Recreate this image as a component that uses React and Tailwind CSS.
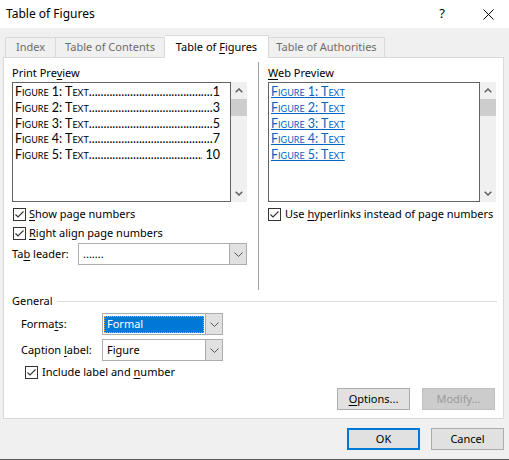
import React from "react";

const ui = { fontFamily: '"Noto Sans", "Open Sans", sans-serif' };
const cal = { fontFamily: 'Lato, "Noto Sans", sans-serif', fontVariant: "small-caps" };

function U({ children }) {
  return <span className="underline underline-offset-2">{children}</span>;
}

function Check() {
  return (
    <span className="flex h-[13px] w-[13px] shrink-0 items-center justify-center border border-[#333333] bg-white">
      <svg width="11" height="11" viewBox="0 0 11 11">
        <path d="M1.5 5.5 L4 8 L9.5 2.5" fill="none" stroke="#333333" strokeWidth="1.1" />
      </svg>
    </span>
  );
}

function Chevron() {
  return (
    <svg width="9" height="5" viewBox="0 0 9 5">
      <path d="M0.5 0.5 L4.5 4.5 L8.5 0.5" fill="none" stroke="#555555" strokeWidth="1" />
    </svg>
  );
}

function Scrollbar() {
  return (
    <div className="flex w-[16px] shrink-0 flex-col items-center bg-[#f0f0f0]">
      <div className="flex h-[17px] w-full items-center justify-center">
        <svg width="8" height="5" viewBox="0 0 8 5">
          <path d="M0.7 4.3 L4 1 L7.3 4.3" fill="none" stroke="#606060" strokeWidth="1.5" />
        </svg>
      </div>
      <div className="h-[17px] w-full bg-[#cdcdcd]" />
      <div className="flex-1" />
      <div className="flex h-[17px] w-full items-center justify-center">
        <svg width="8" height="5" viewBox="0 0 8 5">
          <path d="M0.7 0.7 L4 4 L7.3 0.7" fill="none" stroke="#606060" strokeWidth="1.5" />
        </svg>
      </div>
    </div>
  );
}

const figures = [
  ["1", "1"],
  ["2", "3"],
  ["3", "5"],
  ["4", "7"],
  ["5", "10"],
];

const dots = ".".repeat(120);

function Select({ value, focused, w }) {
  return (
    <div className={`flex h-[22px] ${w} border border-[#adadad] bg-white`}>
      <div className="flex min-w-0 flex-1 items-center px-[1px]">
        {focused ? (
          <div className="flex h-[17px] w-full items-center border border-dotted border-[#f0a040] bg-[#0078d7] px-[2px] text-white">
            {value}
          </div>
        ) : (
          <span className="px-[3px]">{value}</span>
        )}
      </div>
      <div className="flex w-[17px] items-center justify-center border-l border-[#adadad] bg-[#e1e1e1]">
        <Chevron />
      </div>
    </div>
  );
}

function Button({ children, primary, disabled }) {
  return (
    <div
      className={`flex h-[22px] w-[73px] items-center justify-center ${
        primary
          ? "border-2 border-[#0078d7] bg-[#e1e1e1]"
          : disabled
          ? "border border-[#bfbfbf] bg-[#cccccc] text-[#9a9a9a]"
          : "border border-[#adadad] bg-[#e1e1e1]"
      }`}
    >
      <span>{children}</span>
    </div>
  );
}

export default function App() {
  return (
    <div
      className="flex h-[460px] w-[509px] flex-col overflow-hidden border-b border-[#5a5a5a] bg-[#f0f0f0] text-[11px] text-black"
      style={ui}
    >
      {/* title bar */}
      <div className="flex h-[28px] shrink-0 items-center bg-white pl-[6px]">
        <span className="text-[12px]">Table of Figures</span>
        <div className="flex-1" />
        <span className="mr-[38px] text-[13px]">?</span>
        <svg className="mr-[15px]" width="11" height="11" viewBox="0 0 11 11">
          <path d="M0.5 0.5 L10.5 10.5 M10.5 0.5 L0.5 10.5" stroke="#000" strokeWidth="1" />
        </svg>
      </div>

      {/* tabs */}
      <div className="flex h-[29px] shrink-0 items-end pl-[5px]">
        <div className="flex h-[20px] w-[51px] items-center justify-center border border-b-0 border-[#d9d9d9] text-[#6d6d6d]">
          <span>Index</span>
        </div>
        <div className="flex h-[20px] w-[109px] items-center justify-center border border-b-0 border-l-0 border-[#d9d9d9] text-[#6d6d6d]">
          <span>Table of Contents</span>
        </div>
        <div className="relative z-10 -mb-px flex h-[23px] w-[104px] items-center justify-center border border-b-0 border-l-0 border-[#d9d9d9] bg-white">
          <span>
            Table of <U>F</U>igures
          </span>
        </div>
        <div className="flex h-[20px] w-[116px] items-center justify-center border border-b-0 border-l-0 border-[#d9d9d9] text-[#6d6d6d]">
          <span>Table of Authorities</span>
        </div>
      </div>

      {/* panel */}
      <div className="ml-[3px] mr-[5px] flex h-[362px] shrink-0 flex-col border border-[#d9d9d9] bg-white">
        <div className="flex pt-[4px]">
          {/* left */}
          <div className="ml-[8px] flex w-[235px] shrink-0 flex-col pb-[25px]">
            <div className="mt-[3px] h-[16px] leading-[16px]">
              Print Pre<U>v</U>iew
            </div>
            <div className="mt-[1px] flex h-[120px]">
              <div className="min-w-0 flex-1 border border-[#646464] pl-[2px] pr-[10px] pt-[1px]" style={cal}>
                {figures.map(([n, p]) => (
                  <div key={n} className="flex h-[15.8px] items-center text-[12.5px] leading-[16px]">
                    <span className="shrink-0">Figure {n}: Text</span>
                    <span className="min-w-0 flex-1 overflow-hidden whitespace-nowrap">{dots}</span>
                    <span className="shrink-0">{n === "5" ? "\u00a0" + p : p}</span>
                  </div>
                ))}
              </div>
              <Scrollbar />
            </div>
            <div className="mt-[4px] flex h-[16px] items-center gap-[3px] pl-[1px]">
              <Check />
              <span>
                <U>S</U>how page numbers
              </span>
            </div>
            <div className="mt-[3px] flex h-[16px] items-center gap-[3px] pl-[1px]">
              <Check />
              <span>
                <U>R</U>ight align page numbers
              </span>
            </div>
            <div className="mt-[2px] flex items-center">
              <span className="w-[66px]">
                Ta<U>b</U> leader:
              </span>
              <Select value="......." w="w-[169px]" />
            </div>
          </div>

          {/* separator */}
          <div className="ml-[11px] w-px shrink-0 bg-[#a0a0a0]" />

          {/* right */}
          <div className="ml-[9px] flex w-[228px] shrink-0 flex-col">
            <div className="mt-[3px] h-[16px] leading-[16px]">
              <U>W</U>eb Preview
            </div>
            <div className="mt-[1px] flex h-[120px]">
              <div className="min-w-0 flex-1 border border-[#646464] pl-[2px] pt-[1px]" style={cal}>
                {figures.map(([n]) => (
                  <div key={n} className="h-[15.8px] text-[12.5px] leading-[16px] text-[#0563c1]">
                    <span className="underline underline-offset-1">Figure {n}: Text</span>
                  </div>
                ))}
              </div>
              <Scrollbar />
            </div>
            <div className="mt-[4px] flex h-[16px] items-center gap-[4px] whitespace-nowrap">
              <Check />
              <span>
                Use <U>h</U>yperlinks instead of page numbers
              </span>
            </div>
          </div>
        </div>

        {/* general */}
        <div className="mt-[3px] flex h-[16px] items-center pl-[8px] pr-[6px]">
          <span>General</span>
          <div className="ml-[4px] h-px flex-1 bg-[#dcdcdc]" />
        </div>
        <div className="mt-[4px] flex items-center pl-[17px]">
          <span className="w-[81px]">
            Forma<U>t</U>s:
          </span>
          <Select value="Formal" focused w="w-[121px]" />
        </div>
        <div className="mt-[4px] flex items-center pl-[17px]">
          <span className="w-[81px]">
            Caption <U>l</U>abel:
          </span>
          <Select value="Figure" w="w-[121px]" />
        </div>
        <div className="mt-[3px] flex h-[16px] items-center gap-[4px] pl-[21px]">
          <Check />
          <span>
            Include label and <U>n</U>umber
          </span>
        </div>
        <div className="mt-[8px] flex justify-end gap-[12px] pr-[8px]">
          <Button>
            <U>O</U>ptions...
          </Button>
          <Button disabled>Modify...</Button>
        </div>
      </div>

      {/* footer buttons */}
      <div className="mt-[9px] flex justify-end gap-[11px] pr-[5px]">
        <Button primary>OK</Button>
        <Button>Cancel</Button>
      </div>
    </div>
  );
}
